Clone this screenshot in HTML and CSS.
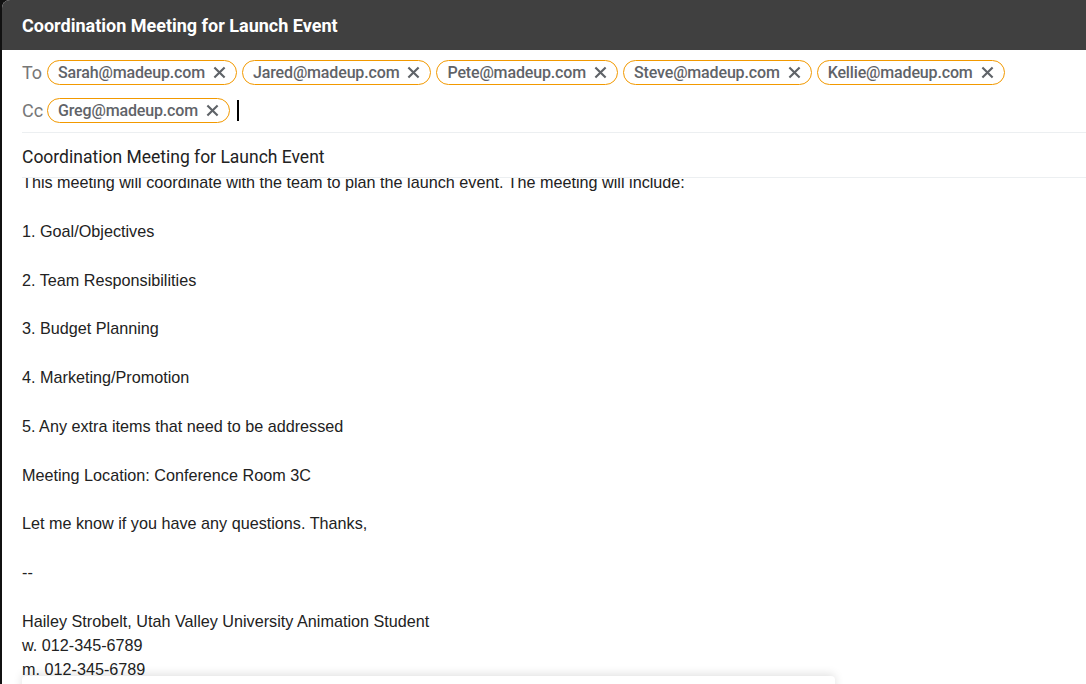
FILE: index.html
```html
<!DOCTYPE html>
<html>
<head>
<meta charset="utf-8">
<link rel="stylesheet" href="styles.css">
</head>
<body>
<div class="window">
  <div class="titlebar">Coordination Meeting for Launch Event</div>
  <div class="recipients">
    <div class="rrow">
      <span class="rlabel">To</span>
      <span class="chip">Sarah@madeup.com<svg class="x" viewBox="0 0 14 14"><path d="M1.5 1.5L12.5 12.5M12.5 1.5L1.5 12.5"/></svg></span>
      <span class="chip">Jared@madeup.com<svg class="x" viewBox="0 0 14 14"><path d="M1.5 1.5L12.5 12.5M12.5 1.5L1.5 12.5"/></svg></span>
      <span class="chip">Pete@madeup.com<svg class="x" viewBox="0 0 14 14"><path d="M1.5 1.5L12.5 12.5M12.5 1.5L1.5 12.5"/></svg></span>
      <span class="chip">Steve@madeup.com<svg class="x" viewBox="0 0 14 14"><path d="M1.5 1.5L12.5 12.5M12.5 1.5L1.5 12.5"/></svg></span>
      <span class="chip">Kellie@madeup.com<svg class="x" viewBox="0 0 14 14"><path d="M1.5 1.5L12.5 12.5M12.5 1.5L1.5 12.5"/></svg></span>
    </div>
    <div class="rrow">
      <span class="rlabel">Cc</span>
      <span class="chip">Greg@madeup.com<svg class="x" viewBox="0 0 14 14"><path d="M1.5 1.5L12.5 12.5M12.5 1.5L1.5 12.5"/></svg></span>
      <span class="caret"></span>
    </div>
  </div>
  <div class="subject">Coordination Meeting for Launch Event</div>
  <div class="bodywrap">
    <div class="bodytext">
      <p>This meeting will coordinate with the team to plan the launch event. The meeting will include:</p>
      <p>1. Goal/Objectives</p>
      <p>2. Team Responsibilities</p>
      <p>3. Budget Planning</p>
      <p>4. Marketing/Promotion</p>
      <p>5. Any extra items that need to be addressed</p>
      <p>Meeting Location: Conference Room 3C</p>
      <p>Let me know if you have any questions. Thanks,</p>
      <p>--</p>
      <div>Hailey Strobelt, Utah Valley University Animation Student</div>
      <div>w. 012-345-6789</div>
      <div>m. 012-345-6789</div>
    </div>
  </div>
  <div class="popup"></div>
</div>
</body>
</html>
```

FILE: styles.css
```css
html, body {
  margin: 0;
  padding: 0;
  height: 100%;
  overflow: hidden;
}
body {
  background: #111;
}
.window {
  position: relative;
  margin-left: 2px;
  height: 684px;
  background: #fff;
  border-top-left-radius: 8px;
  overflow: hidden;
}
.titlebar {
  height: 50px;
  background: #404040;
  color: #fff;
  font-family: Roboto, "Liberation Sans", sans-serif;
  font-weight: 700;
  font-size: 18px;
  line-height: 51px;
  padding-left: 20px;
}
.recipients {
  margin-left: 20px;
  padding-top: 10px;
  padding-bottom: 9px;
  border-bottom: 1px solid #eceff1;
  display: flex;
  flex-direction: column;
  gap: 13px;
}
.rrow {
  display: flex;
  align-items: center;
  height: 25px;
}
.rlabel {
  font-family: Roboto, "Liberation Sans", sans-serif;
  font-size: 18px;
  color: #777;
  width: 25px;
}
.chip {
  display: inline-flex;
  align-items: center;
  height: 23px;
  border: 1px solid #f29900;
  border-radius: 13px;
  padding: 0 10px 0 10px;
  margin-right: 5px;
  font-family: Roboto, "Liberation Sans", sans-serif;
  font-weight: 500;
  font-size: 16px;
  letter-spacing: -0.15px;
  color: #5f6368;
  white-space: nowrap;
}
.x {
  width: 13px;
  height: 13px;
  margin-left: 8px;
  fill: none;
  stroke: #5f6368;
  stroke-width: 2.3;
}
.caret {
  display: inline-block;
  width: 2px;
  height: 21px;
  background: #000;
  margin-left: 2px;
}
.subject {
  margin-left: 20px;
  height: 44px;
  line-height: 48px;
  border-bottom: 1px solid #eceff1;
  font-family: Roboto, "Liberation Sans", sans-serif;
  font-size: 17.5px;
  color: #222;
}
.bodywrap {
  overflow: hidden;
  height: 600px;
}
.bodytext {
  margin-top: -8px;
  padding-left: 20px;
  font-family: "Liberation Sans", Arial, sans-serif;
  font-size: 16.2px;
  line-height: 24px;
  color: #222;
}
.bodytext p {
  margin: 0 0 24.75px 0;
}
.popup {
  position: absolute;
  left: 20px;
  top: 676px;
  width: 813px;
  height: 60px;
  background: #fff;
  border-radius: 4px;
  box-shadow: 0 -2px 10px rgba(0,0,0,0.12);
}
```
